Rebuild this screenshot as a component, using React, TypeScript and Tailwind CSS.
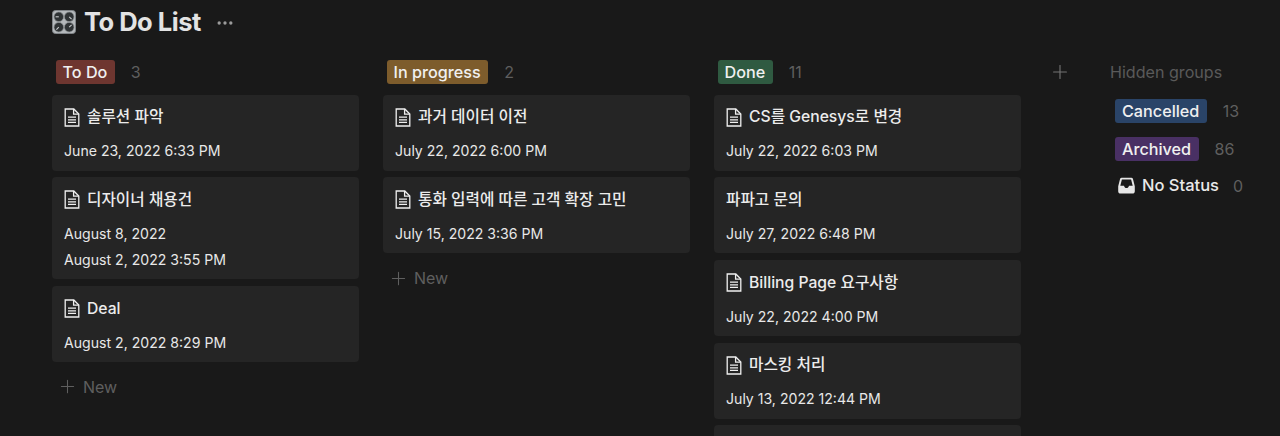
import { Plus, MoreHorizontal } from 'lucide-react';

type Card = { title: string; dates: string[]; icon?: boolean };

const columns = [
  {
    name: 'To Do',
    count: 3,
    badge: 'bg-[#6e3630]',
    cards: [
      { title: '솔루션 파악', dates: ['June 23, 2022 6:33 PM'], icon: true },
      { title: '디자이너 채용건', dates: ['August 8, 2022', 'August 2, 2022 3:55 PM'], icon: true },
      { title: 'Deal', dates: ['August 2, 2022 8:29 PM'], icon: true },
    ] as Card[],
    showNew: true,
  },
  {
    name: 'In progress',
    count: 2,
    badge: 'bg-[#7d5c2c]',
    cards: [
      { title: '과거 데이터 이전', dates: ['July 22, 2022 6:00 PM'], icon: true },
      { title: '통화 입력에 따른 고객 확장 고민', dates: ['July 15, 2022 3:36 PM'], icon: true },
    ] as Card[],
    showNew: true,
  },
  {
    name: 'Done',
    count: 11,
    badge: 'bg-[#2f5a41]',
    cards: [
      { title: 'CS를 Genesys로 변경', dates: ['July 22, 2022 6:03 PM'], icon: true },
      { title: '파파고 문의', dates: ['July 27, 2022 6:48 PM'] },
      { title: 'Billing Page 요구사항', dates: ['July 22, 2022 4:00 PM'], icon: true },
      { title: '마스킹 처리', dates: ['July 13, 2022 12:44 PM'], icon: true },
      { title: '', dates: [''] },
    ] as Card[],
    showNew: false,
  },
];

function DocIcon() {
  return (
    <svg width="16" height="19" viewBox="0 0 16 19" fill="none" stroke="#f0f0f0" strokeWidth="1.3" className="shrink-0">
      <path d="M1.2 1h8.6l5 5v12H1.2z" />
      <path d="M9.6 1v5.2h5.2" />
      <path d="M4 9.2h8M4 11.8h8M4 14.4h8" />
    </svg>
  );
}

function KnobIcon() {
  const knobs = [
    [6.8, 6.8, 3.6, 6.8],
    [17.2, 6.8, 19.6, 9.2],
    [6.8, 17.2, 4.4, 19.6],
    [17.2, 17.2, 19.6, 14.8],
  ];
  return (
    <svg width="24" height="24" viewBox="0 0 24 24" className="shrink-0">
      <rect x="0.5" y="0.5" width="23" height="23" rx="3" fill="#b4b8bb" stroke="#808488" />
      {knobs.map(([cx, cy, x2, y2], i) => (
        <g key={i}>
          <circle cx={cx} cy={cy} r="4.8" fill="#2e3234" stroke="#8c9194" strokeWidth="0.7" />
          <line x1={cx} y1={cy} x2={x2} y2={y2} stroke="#c8cbcd" strokeWidth="1.1" />
        </g>
      ))}
    </svg>
  );
}

function Badge({ label, color }: { label: string; color: string }) {
  return (
    <span className={`rounded-[3px] pl-[7px] pr-[7.5px] text-[16.2px] font-medium leading-[24px] text-[#f0f0f0] ${color}`}>{label}</span>
  );
}

function TaskCard({ card }: { card: Card }) {
  return (
    <div className="w-[307px] shrink-0 rounded-[4px] bg-[#252525] pb-[6.8px] pl-[12px] pr-3 pt-[10.5px]">
      <div className="flex h-[24px] items-center gap-[7px] text-[15.7px] font-medium text-[#ececec]">
        {card.icon && <DocIcon />}
        <span>{card.title}</span>
      </div>
      <div className="mt-[8.7px] flex flex-col text-[14.1px] text-[#e8e8e8]">
        {card.dates.map((d, i) => (
          <div key={i} className="flex h-[26px] items-center">
            {d}
          </div>
        ))}
      </div>
    </div>
  );
}

export default function App() {
  return (
    <div
      className="h-[436px] w-[1280px] overflow-hidden bg-[#191919] pl-[52px]"
      style={{ fontFamily: 'Inter, "Noto Sans CJK KR", sans-serif' }}
    >
      <div className="flex h-[44px] items-center">
        <KnobIcon />
        <h1 className="ml-[8px] text-[25.5px] font-bold tracking-[-0.5px] text-[#e3e3e3]">To Do List</h1>
        <MoreHorizontal className="ml-[14px] mt-[2px] h-[20px] w-[20px] text-[#9b9b9b]" />
      </div>

      <div className="mt-[16px] flex items-start">
        {columns.map((col) => (
          <div key={col.name} className="mr-[24px] flex w-[307px] shrink-0 flex-col">
            <div className="flex h-[24px] items-center pl-[3.5px]">
              <Badge label={col.name} color={col.badge} />
              <span className="ml-[16px] text-[16px] text-[#5f5f5f]">{col.count}</span>
            </div>
            <div className="mt-[10.6px] flex flex-col gap-[6.7px]">
              {col.cards.map((c, i) => (
                <TaskCard key={i} card={c} />
              ))}
            </div>
            {col.showNew && (
              <div className="mt-[13px] flex h-[24px] items-center gap-[5px] pl-[5px] text-[16px] text-[#5f5f5f]">
                <Plus className="h-[21px] w-[21px]" strokeWidth={1.2} />
                New
              </div>
            )}
          </div>
        ))}

        <Plus className="ml-[4px] mt-[1px] h-[22px] w-[22px] shrink-0 text-[#757575]" strokeWidth={1.2} />

        <div className="ml-[39px] flex flex-col">
          <div className="h-[24px] text-[16.1px] leading-[24px] text-[#5a5a5a]">Hidden groups</div>
          <div className="mt-[15px] flex h-[24px] items-center pl-[5px]">
            <Badge label="Cancelled" color="bg-[#2a4468]" />
            <span className="ml-[16px] text-[16px] text-[#5f5f5f]">13</span>
          </div>
          <div className="mt-[14px] flex h-[24px] items-center pl-[5px]">
            <Badge label="Archived" color="bg-[#493064]" />
            <span className="ml-[16px] text-[16px] text-[#5f5f5f]">86</span>
          </div>
          <div className="mt-[12.5px] flex h-[24px] items-center pl-[8px]">
            <svg width="17" height="17" viewBox="0 0 17 17" className="shrink-0">
              <path
                d="M3.6 0.8h9.8c.7 0 1.2.4 1.5 1l1.9 7.4v5c0 1.5-.9 2.4-2.4 2.4H2.6C1.1 16.6.2 15.7.2 14.2v-5l1.9-7.4c.3-.6.8-1 1.5-1zM3.9 2.6 2.3 8.7h3.7c.4 1.5 1.3 2.4 2.5 2.4s2.1-.9 2.5-2.4h3.7L13.1 2.6z"
                fill="#e6e6e6"
                fillRule="evenodd"
              />
            </svg>
            <span className="ml-[7px] text-[16.5px] font-medium text-[#e9e9e9]">No Status</span>
            <span className="ml-[14px] text-[16px] text-[#5f5f5f]">0</span>
          </div>
        </div>
      </div>
    </div>
  );
}
